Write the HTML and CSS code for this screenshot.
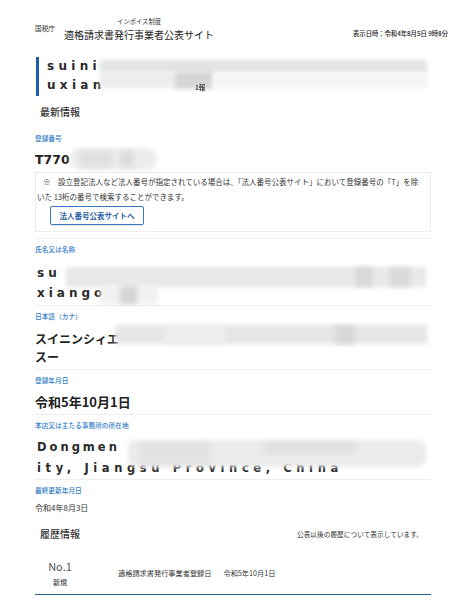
FILE: index.html
```html
<!DOCTYPE html>
<html lang="ja">
<head>
<meta charset="utf-8">
<title>適格請求書発行事業者公表サイト</title>
<link rel="stylesheet" href="styles.css">
</head>
<body>
<header class="header">
  <div class="brand">
    <span class="agency">国税庁</span>
    <div class="site">
      <span class="site-sub">インボイス制度</span>
      <span class="site-title">適格請求書発行事業者公表サイト</span>
    </div>
  </div>
  <div class="timestamp">表示日時：令和4年8月5日 9時8分</div>
</header>

<main class="page">
  <div class="reg-name">
    <div class="latin">suini<br>uxian</div>
    <div class="redact">
      <span class="r r-title-a"></span>
      <span class="r r-title-b"></span>
      <span class="r r-title-c"></span>
      <span class="r r-title-d"></span>
      <span class="redact-text">1報</span>
    </div>
  </div>

  <h2 class="section-title">最新情報</h2>

  <div class="reg-no">
    <div class="label">登録番号</div>
    <div class="value-wrap">
      <div class="value value-no">T770</div>
      <div class="redact">
        <span class="r r-no-a"></span>
        <span class="r r-no-b"></span>
        <span class="r r-no-c"></span>
      </div>
    </div>
    <div class="notice">
      <p class="notice-text">※　設立登記法人など法人番号が指定されている場合は、「法人番号公表サイト」において登録番号の「T」を除<br>いた 13桁の番号で検索することができます。</p>
      <a class="btn" href="#">法人番号公表サイトへ</a>
    </div>
  </div>

  <div class="field field-name">
    <div class="label">氏名又は名称</div>
    <div class="value-wrap value-name">
      <div class="latin latin-name">su<br>xiango</div>
      <div class="redact">
        <span class="r r-name-a"></span>
        <span class="r r-name-b"></span>
        <span class="r r-name-c"></span>
        <span class="r r-name-d"></span>
        <span class="r r-name-e"></span>
      </div>
    </div>
  </div>

  <div class="field field-kana">
    <div class="label">日本語（カナ）</div>
    <div class="value-wrap value-kana">
      <div class="kana">スイニンシィエ<br>スー</div>
      <div class="redact">
        <span class="r r-kana-a"></span>
        <span class="r r-kana-b"></span>
        <span class="r r-kana-c"></span>
      </div>
    </div>
  </div>

  <div class="field">
    <div class="label">登録年月日</div>
    <div class="value value-date">令和5年10月1日</div>
  </div>

  <div class="field field-addr">
    <div class="label">本店又は主たる事務所の所在地</div>
    <div class="value-wrap value-addr">
      <div class="latin latin-addr">Dongmen<br><span class="addr-line2">ity, Jiangsu Province, China</span></div>
      <div class="redact">
        <span class="r r-addr-a"></span>
        <span class="r r-addr-b"></span>
        <span class="r r-addr-c"></span>
      </div>
    </div>
  </div>

  <div class="field">
    <div class="label">最終更新年月日</div>
    <div class="value value-small">令和4年8月3日</div>
  </div>

  <div class="history-head">
    <h2 class="section-title history-title">履歴情報</h2>
    <span class="history-note">公表以後の履歴について表示しています。</span>
  </div>

  <div class="history-row">
    <div class="history-no">
      <span class="no">No.1</span>
      <span class="kind">新規</span>
    </div>
    <div class="history-desc">
      <span>適格請求書発行事業者登録日</span><span class="history-date">令和5年10月1日</span>
    </div>
  </div>
</main>
</body>
</html>
```

FILE: styles.css
```css
* { box-sizing: border-box; }

html, body {
  margin: 0;
  padding: 0;
  background: #ffffff;
}

body {
  font-family: "Noto Sans CJK JP", "Noto Sans", sans-serif;
  color: #222;
}

/* header */
.header {
  display: flex;
  justify-content: space-between;
  align-items: flex-start;
  padding: 18px 18px 0 35px;
  height: 41px;
}

.brand {
  display: flex;
  align-items: center;
}

.agency {
  font-size: 6.7px;
  line-height: 8px;
  margin-right: 9px;
  margin-bottom: 3px;
  color: #333;
}

.site {
  display: flex;
  flex-direction: column;
  align-items: center;
}

.site-sub {
  font-size: 6.3px;
  line-height: 8px;
  color: #333;
}

.site-title {
  font-size: 10px;
  line-height: 12px;
  margin-top: 3px;
  color: #222;
}

.timestamp {
  font-size: 6.3px;
  line-height: 8px;
  margin-top: 12px;
  color: #222;
  font-weight: 500;
}

/* page */
.page {
  margin: 0 35px;
}

.reg-name {
  position: relative;
  margin-top: 16px;
  border-left: 3px solid #1f5fa8;
  margin-left: 1px;
  padding-left: 8px;
  height: 39px;
}

.latin {
  font-family: "DejaVu Sans", "Noto Sans", sans-serif;
  font-weight: bold;
  font-size: 12px;
  line-height: 19px;
  letter-spacing: 4.3px;
  color: #2a2a2a;
}

.section-title {
  margin: 9px 0 0;
  padding-left: 5px;
  font-size: 10px;
  line-height: 14px;
  font-weight: 500;
  color: #333;
}

.label {
  font-size: 6.7px;
  line-height: 10px;
  color: #2f7cc6;
  font-weight: 500;
}

.reg-no {
  margin-top: 14px;
  padding-bottom: 6px;
}

.value-wrap {
  position: relative;
}

.value-no {
  margin-top: 8px;
  font-family: "DejaVu Sans", sans-serif;
  font-weight: bold;
  font-size: 12.5px;
  line-height: 20px;
  color: #222;
}

.notice {
  margin-top: 2px;
  border: 1px solid #ececec;
  padding: 1px 3px 6px 1px;
}

.notice-text {
  margin: 0;
  font-size: 7.5px;
  line-height: 15px;
  text-indent: 6px;
  color: #333;
  white-space: nowrap;
}

.btn {
  display: flex;
  align-items: center;
  justify-content: center;
  margin: 2px 0 0 13px;
  width: 94px;
  height: 19px;
  border: 1px solid #3a78c3;
  border-radius: 2px;
  box-shadow: 0 1px 1px rgba(0,0,0,0.12);
  font-size: 7.5px;
  font-weight: bold;
  color: #2a62a8;
  text-decoration: none;
}

.field {
  border-top: 1px solid #ededed;
  padding: 5px 0 2px;
}

.field-name { padding-bottom: 2px; }
.field-kana { padding-top: 5px; padding-bottom: 3px; }
.field-addr { padding-bottom: 1px; }

.value {
  margin-top: 7px;
}

.value-name {
  margin-top: 9px;
}

.latin-name {
  line-height: 20px;
  letter-spacing: 4px;
  padding-left: 2px;
}

.value-kana {
  margin-top: 9px;
}

.kana {
  font-size: 12px;
  line-height: 18px;
  font-weight: bold;
  color: #222;
}

.value-date {
  font-size: 13px;
  line-height: 20px;
  font-weight: bold;
}

.value-addr {
  margin-top: 7px;
}

.latin-addr {
  font-size: 11.5px;
  line-height: 20.5px;
  letter-spacing: 3px;
  padding-left: 2px;
}

.addr-line2 {
  letter-spacing: 4.6px;
}

.value-small {
  margin-top: 6px;
  font-size: 8px;
  line-height: 14px;
  color: #333;
}

/* redaction blur overlays */
.redact {
  position: absolute;
  inset: 0;
  pointer-events: none;
}

.r {
  position: absolute;
  display: block;
  background: #e6e6e6;
  filter: blur(2px);
}

.redact-text {
  position: absolute;
  left: 156px;
  top: 26px;
  font-size: 6.5px;
  line-height: 8px;
  font-weight: bold;
  color: #444;
  filter: blur(0.3px);
}

.r-title-a { left: 61px; top: 3px; width: 327px; height: 13px; background: #e3e3e3; }
.r-title-b { left: 61px; top: 15px; width: 79px; height: 16px; background: #ededed; }
.r-title-c { left: 136px; top: 15px; width: 38px; height: 17px; background: #d6d6d6; }
.r-title-d { left: 174px; top: 16px; width: 214px; height: 15px; background: #f4f4f4; }

.r-no-a { left: 35px; top: -2px; width: 87px; height: 22px; background: #ececec; border-radius: 10px; }
.r-no-b { left: 45px; top: 1px; width: 33px; height: 16px; background: #e0e0e0; }
.r-no-c { left: 85px; top: 1px; width: 14px; height: 16px; background: #dcdcdc; }

.r-name-a { left: 31px; top: 4px; width: 360px; height: 20px; background: #e8e8e8; }
.r-name-b { left: 320px; top: 4px; width: 18px; height: 20px; background: #d9d9d9; }
.r-name-c { left: 355px; top: 4px; width: 20px; height: 20px; background: #dadada; }
.r-name-d { left: 65px; top: 23px; width: 58px; height: 18px; background: #f0f0f0; }
.r-name-e { left: 85px; top: 23px; width: 17px; height: 18px; background: #d6d6d6; }

.r-kana-a { left: 80px; top: -5px; width: 312px; height: 19px; background: #e6e6e6; }
.r-kana-b { left: 300px; top: -5px; width: 20px; height: 19px; background: #d8d8d8; }
.r-kana-c { left: 130px; top: -5px; width: 60px; height: 19px; background: #eeeeee; }

.r-addr-a { left: 93px; top: 3px; width: 298px; height: 27px; background: #ebebeb; border-radius: 8px; }
.r-addr-b { left: 105px; top: 6px; width: 70px; height: 22px; background: #e2e2e2; }
.r-addr-c { left: 230px; top: 5px; width: 90px; height: 12px; background: #e0e0e0; }

/* history */
.history-head {
  display: flex;
  justify-content: space-between;
  align-items: center;
  margin-top: 10px;
  padding-right: 8px;
}

.history-title {
  margin: 0;
}

.history-note {
  font-size: 6.7px;
  line-height: 10px;
  color: #333;
}

.history-row {
  display: flex;
  align-items: center;
  margin-top: 18px;
  padding-bottom: 7px;
  border-bottom: 1px solid #24648a;
}

.history-no {
  width: 50px;
  display: flex;
  flex-direction: column;
  align-items: center;
}

.no {
  font-size: 11px;
  line-height: 14px;
  color: #555;
}

.kind {
  margin-top: 4px;
  font-size: 7px;
  line-height: 10px;
  font-weight: 500;
  color: #444;
}

.history-desc {
  margin-left: 33px;
  font-size: 7.2px;
  line-height: 10px;
  color: #333;
}

.history-date {
  margin-left: 12px;
}
```
